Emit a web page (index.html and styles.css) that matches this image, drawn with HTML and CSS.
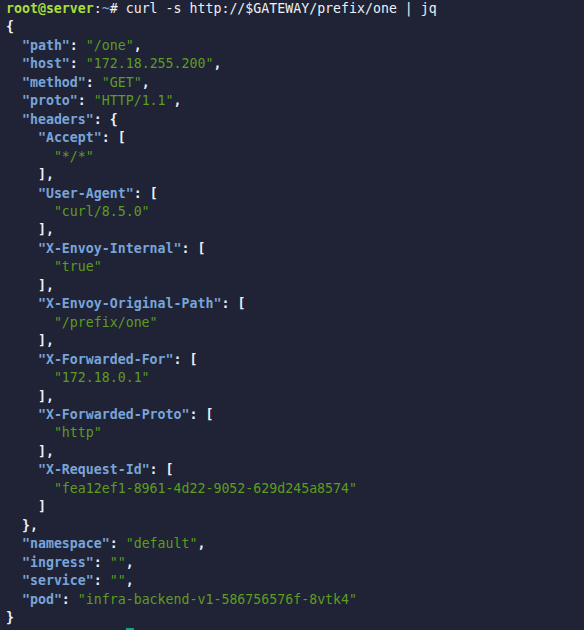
FILE: index.html
```html
<!DOCTYPE html>
<html>
<head>
<meta charset="utf-8">
<link rel="stylesheet" href="styles.css">
</head>
<body>
<pre class="term"><span class="pu">root@server</span><span class="pc">:</span><span class="ti">~</span><span class="pc"># curl -s http://$GATEWAY/prefix/one | jq</span>
<b>{</b>
  <span class="k">"path"</span><b>:</b> <span class="s">"/one"</span><b>,</b>
  <span class="k">"host"</span><b>:</b> <span class="s">"172.18.255.200"</span><b>,</b>
  <span class="k">"method"</span><b>:</b> <span class="s">"GET"</span><b>,</b>
  <span class="k">"proto"</span><b>:</b> <span class="s">"HTTP/1.1"</span><b>,</b>
  <span class="k">"headers"</span><b>:</b> <b>{</b>
    <span class="k">"Accept"</span><b>:</b> <b>[</b>
      <span class="s">"*/*"</span>
    <b>],</b>
    <span class="k">"User-Agent"</span><b>:</b> <b>[</b>
      <span class="s">"curl/8.5.0"</span>
    <b>],</b>
    <span class="k">"X-Envoy-Internal"</span><b>:</b> <b>[</b>
      <span class="s">"true"</span>
    <b>],</b>
    <span class="k">"X-Envoy-Original-Path"</span><b>:</b> <b>[</b>
      <span class="s">"/prefix/one"</span>
    <b>],</b>
    <span class="k">"X-Forwarded-For"</span><b>:</b> <b>[</b>
      <span class="s">"172.18.0.1"</span>
    <b>],</b>
    <span class="k">"X-Forwarded-Proto"</span><b>:</b> <b>[</b>
      <span class="s">"http"</span>
    <b>],</b>
    <span class="k">"X-Request-Id"</span><b>:</b> <b>[</b>
      <span class="s">"fea12ef1-8961-4d22-9052-629d245a8574"</span>
    <b>]</b>
  <b>},</b>
  <span class="k">"namespace"</span><b>:</b> <span class="s">"default"</span><b>,</b>
  <span class="k">"ingress"</span><b>:</b> <span class="s">""</span><b>,</b>
  <span class="k">"service"</span><b>:</b> <span class="s">""</span><b>,</b>
  <span class="k">"pod"</span><b>:</b> <span class="s">"infra-backend-v1-586756576f-8vtk4"</span>
<b>}</b>
<span class="pad">               </span><span class="cursor"> </span></pre>
</body>
</html>
```
FILE: styles.css
```css
html, body {
  margin: 0;
  padding: 0;
  background: #1f2335;
  height: 100%;
  overflow: hidden;
}
.term {
  margin: 0;
  padding: 0 0 0 6px;
  font-family: "DejaVu Sans Mono", "Liberation Mono", monospace;
  font-size: 13.25px;
  line-height: 18.45px;
  color: #e6e8ee;
  white-space: pre;
}
.term b {
  font-weight: bold;
  color: #eef0f4;
}
.pu {
  color: #a9df3c;
  font-weight: bold;
}
.pc {
  color: #eef0f4;
}
.ti {
  color: #7aa6e0;
}
.k {
  color: #79a4d9;
  font-weight: bold;
}
.s {
  color: #5e9c20;
}
.cursor {
  background: #18a37f;
}
```
